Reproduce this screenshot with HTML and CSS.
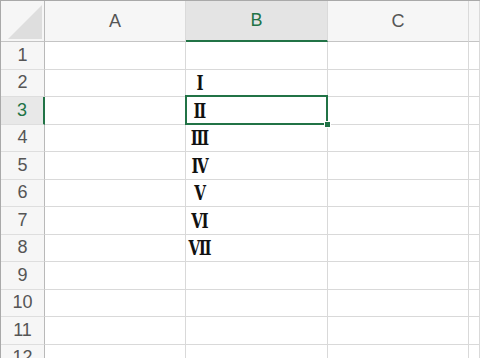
FILE: index.html
```html
<!DOCTYPE html>
<html lang="ja">
<head>
    <meta charset="UTF-8">
    <title>Sheet</title>
    <link rel="stylesheet" href="styles.css">
</head>
<body>
    <div class="sheet">
        <div class="corner"><span class="tri"></span></div>
        <div class="colhead">A</div>
        <div class="colhead active">B</div>
        <div class="colhead">C</div>
        <div class="colhead"></div>

        <div class="rowhead">1</div><div class="cell"></div><div class="cell"></div><div class="cell"></div><div class="cell"></div>
        <div class="rowhead">2</div><div class="cell"></div><div class="cell"><span class="num">Ⅰ</span></div><div class="cell"></div><div class="cell"></div>
        <div class="rowhead active">3</div><div class="cell"></div><div class="cell selected"><span class="num">Ⅱ</span></div><div class="cell"></div><div class="cell"></div>
        <div class="rowhead">4</div><div class="cell"></div><div class="cell"><span class="num">Ⅲ</span></div><div class="cell"></div><div class="cell"></div>
        <div class="rowhead">5</div><div class="cell"></div><div class="cell"><span class="num">Ⅳ</span></div><div class="cell"></div><div class="cell"></div>
        <div class="rowhead">6</div><div class="cell"></div><div class="cell"><span class="num">Ⅴ</span></div><div class="cell"></div><div class="cell"></div>
        <div class="rowhead">7</div><div class="cell"></div><div class="cell"><span class="num">Ⅵ</span></div><div class="cell"></div><div class="cell"></div>
        <div class="rowhead">8</div><div class="cell"></div><div class="cell"><span class="num">Ⅶ</span></div><div class="cell"></div><div class="cell"></div>
        <div class="rowhead">9</div><div class="cell"></div><div class="cell"></div><div class="cell"></div><div class="cell"></div>
        <div class="rowhead">10</div><div class="cell"></div><div class="cell"></div><div class="cell"></div><div class="cell"></div>
        <div class="rowhead">11</div><div class="cell"></div><div class="cell"></div><div class="cell"></div><div class="cell"></div>
        <div class="rowhead">12</div><div class="cell"></div><div class="cell"></div><div class="cell"></div><div class="cell"></div>
    </div>
</body>
</html>
```

FILE: styles.css
```css
body {
    margin: 0;
    background: #fff;
    font-family: "Liberation Sans", Arial, sans-serif;
    overflow: hidden;
}
.sheet {
    display: grid;
    grid-template-columns: 44px 141px 142px 141px 1fr;
    grid-template-rows: 41px repeat(12, 27.5px);
    border-top: 1px solid #a9a9a9;
    border-left: 1px solid #a9a9a9;
    width: 479px;
}
.sheet > div {
    box-sizing: border-box;
}
.corner {
    position: relative;
    background: #f6f6f6;
    border-right: 1px solid #b9b9b9;
    border-bottom: 1px solid #c4c4c4;
}
.corner .tri {
    position: absolute;
    right: 2px;
    bottom: 2px;
    width: 0;
    height: 0;
    border-left: 34px solid transparent;
    border-bottom: 34px solid #dedede;
}
.colhead {
    background: #f6f6f6;
    border-right: 1px solid #dadada;
    border-bottom: 1px solid #c4c4c4;
    color: #555;
    font-size: 18px;
    display: flex;
    align-items: center;
    justify-content: center;
}
.colhead.active {
    background: #e4e4e4;
    color: #217346;
    border-bottom: 2px solid #217346;
}
.rowhead {
    background: #f6f6f6;
    border-right: 1px solid #b9b9b9;
    border-bottom: 1px solid #dedede;
    color: #555;
    font-size: 18px;
    display: flex;
    align-items: center;
    justify-content: center;
}
.rowhead.active {
    background: #e8e8e8;
    color: #217346;
    border-right: 2px solid #217346;
}
.cell {
    border-right: 1px solid #d9d9d9;
    border-bottom: 1px solid #d9d9d9;
    display: flex;
    align-items: center;
    padding-left: 4px;
}
.cell.selected {
    position: relative;
}
.cell.selected::before {
    content: "";
    position: absolute;
    top: -2px;
    left: -1px;
    right: -1px;
    bottom: -1px;
    border: 2px solid #217346;
}
.cell.selected::after {
    content: "";
    position: absolute;
    right: -4px;
    bottom: -4px;
    width: 5px;
    height: 5px;
    background: #217346;
    border: 1px solid #fff;
}
.num {
    display: inline-flex;
    justify-content: center;
    width: 20px;
    white-space: nowrap;
    font-family: "DejaVu Serif", "Noto Sans CJK JP", serif;
    font-weight: bold;
    font-size: 21px;
    line-height: 1;
    color: #111;
    transform: scaleX(0.72);
}
```
